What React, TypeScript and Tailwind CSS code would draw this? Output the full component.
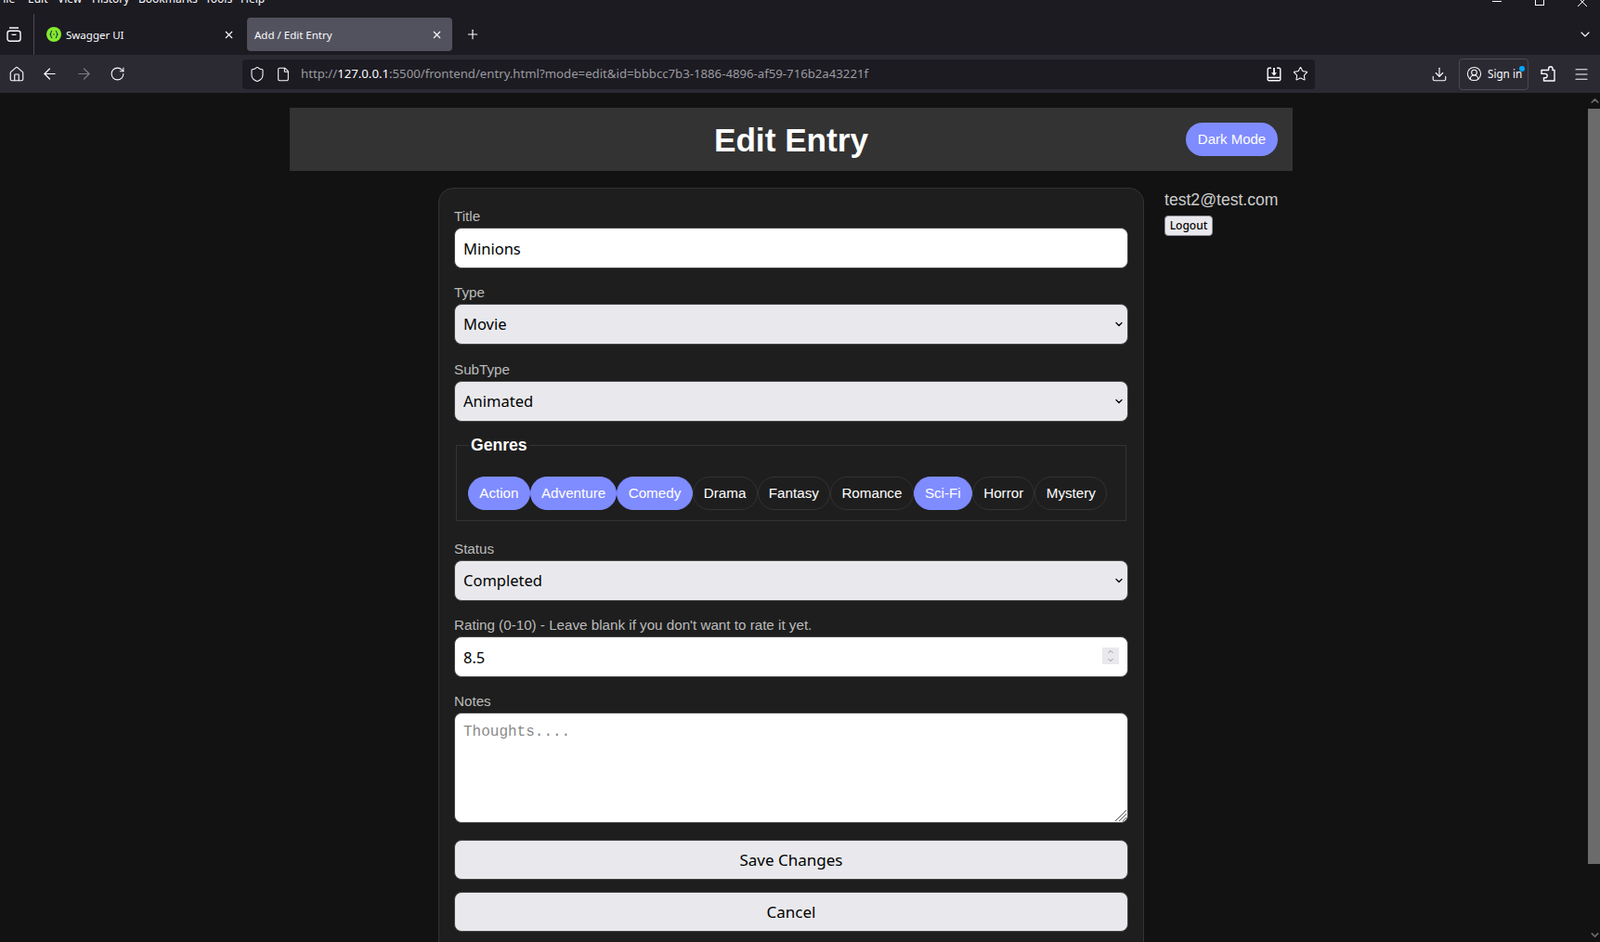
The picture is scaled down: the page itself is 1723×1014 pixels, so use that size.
import {
  ArrowLeft,
  ArrowRight,
  ChevronDown,
  ChevronUp,
  CircleUserRound,
  Download,
  File,
  Home,
  Menu,
  Plus,
  RotateCw,
  Shield,
  Star,
  X,
} from "lucide-react";

const menuItems = [
  { name: "File", width: "w-[33px]" },
  { name: "Edit", width: "w-[32px]" },
  { name: "View", width: "w-[37px]" },
  { name: "History", width: "w-[50px]" },
  { name: "Bookmarks", width: "w-[72px]" },
  { name: "Tools", width: "w-[38px]" },
  { name: "Help", width: "w-[30px]" },
];

const genres = [
  { name: "Action", active: true },
  { name: "Adventure", active: true },
  { name: "Comedy", active: true },
  { name: "Drama", active: false },
  { name: "Fantasy", active: false },
  { name: "Romance", active: false },
  { name: "Sci-Fi", active: true },
  { name: "Horror", active: false },
  { name: "Mystery", active: false },
];

const labelClass = "mb-[3px] block h-[18px] text-[15.2px] leading-[18px] text-[#bbbbbb]";
const controlClass =
  "block h-[44px] w-full rounded-[8px] border border-[#444444] px-[9px] pt-[1px] font-['Noto_Sans',sans-serif] text-[16.5px] text-black outline-none";
const buttonClass =
  "block h-[43px] w-full rounded-[8px] border border-[#444444] bg-[#e9e9ed] font-['Noto_Sans',sans-serif] text-[17px] text-black";

function SelectField({ label, value, spacing }: { label: string; value: string; spacing: string }) {
  return (
    <div className={spacing}>
      <label className={labelClass}>{label}</label>
      <div className="relative">
        <select
          defaultValue={value}
          className={`${controlClass} appearance-none bg-[#e9e9ed]`}
        >
          <option>{value}</option>
        </select>
        <ChevronDown
          size={12}
          strokeWidth={2.5}
          className="pointer-events-none absolute right-[4px] top-[16px] text-black"
        />
      </div>
    </div>
  );
}

function WindowControls() {
  return (
    <div className="ml-auto mr-[-4px] flex text-white">
      <div className="flex w-[46px] justify-center">
        <svg width="10" height="10" viewBox="0 0 10 10" stroke="currentColor" fill="none">
          <path d="M0 1.5h10" />
        </svg>
      </div>
      <div className="flex w-[46px] justify-center">
        <svg width="10" height="10" viewBox="0 0 10 10" stroke="currentColor" fill="none">
          <rect x="0.5" y="-4.5" width="9" height="10" />
        </svg>
      </div>
      <div className="flex w-[46px] justify-center">
        <svg width="10" height="10" viewBox="0 0 10 10" stroke="currentColor" fill="none">
          <path d="M0 -3l10 10M10 -3L0 7" />
        </svg>
      </div>
    </div>
  );
}

function BrowserChrome() {
  return (
    <div className="shrink-0 bg-[#1c1b22] font-['Noto_Sans',sans-serif] text-[#fbfbfe]">
      {/* menu bar is cut off at the top of the screen */}
      <div className="flex h-[10px] overflow-hidden">
        <div className="ml-[-3px] mt-[-11px] flex text-[12px] leading-[20px]">
          {menuItems.map((item) => (
            <span key={item.name} className={item.width}>
              {item.name}
            </span>
          ))}
        </div>
        <WindowControls />
      </div>

      <div className="flex h-[49px] items-center pt-[5px]">
        <div className="flex w-[28px] justify-center pl-[1px]">
          <svg width="16" height="16" viewBox="0 0 16 16" fill="none" stroke="currentColor" strokeWidth="1.4">
            <rect x="1" y="4.2" width="14" height="11" rx="2.5" />
            <path d="M3 1h10M5.6 8.4h4.8" />
          </svg>
        </div>
        <div className="ml-[8px] h-[44px] w-px self-end bg-[#4a4a52]" />
        <div className="flex w-[229px] items-center pl-[13px]">
          <svg width="16" height="16" viewBox="0 0 16 16" className="shrink-0">
            <circle cx="8" cy="8" r="8" fill="#85ea2d" />
            <path
              d="M6.2 4.2C4.6 4.2 5.4 7.2 4 8c1.4.8.6 3.8 2.2 3.8M9.8 4.2c1.6 0 .8 3 2.2 3.8-1.4.8-.6 3.8-2.2 3.8"
              fill="none"
              stroke="#173647"
              strokeWidth="1.1"
            />
            <circle cx="8" cy="8" r="0.7" fill="#173647" />
          </svg>
          <span className="ml-[5px] pt-[1px] text-[11.5px]">Swagger UI</span>
          <X size={13} strokeWidth={2} className="ml-auto mr-[13px]" />
        </div>
        <div className="flex h-[36px] w-[221px] items-center rounded-[4px] bg-[#52525e] pl-[8px] pr-[10px] text-[11.5px]">
          <span className="pt-[1px]">Add / Edit Entry</span>
          <X size={13} strokeWidth={2} className="ml-auto" />
        </div>
        <div className="flex w-[44px] justify-center">
          <Plus size={16} strokeWidth={1.7} />
        </div>
        <div className="ml-auto flex w-[32px] justify-center">
          <ChevronDown size={16} strokeWidth={1.7} />
        </div>
      </div>

      <div className="flex h-[41px] items-center bg-[#2b2a33]">
        <div className="flex w-[35px] justify-center">
          <Home size={18} strokeWidth={1.5} />
        </div>
        <div className="flex w-[37px] justify-center">
          <ArrowLeft size={19} strokeWidth={1.5} />
        </div>
        <div className="flex w-[36px] justify-center text-[#7b7b82]">
          <ArrowRight size={19} strokeWidth={1.5} />
        </div>
        <div className="flex w-[36px] justify-center">
          <RotateCw size={17} strokeWidth={1.5} />
        </div>
        <div className="ml-[117px] flex h-[32px] w-[1155px] items-center rounded-[4px] bg-[#1c1b22] pl-[7px]">
          <Shield size={18} strokeWidth={1.4} />
          <File size={16} strokeWidth={1.6} className="ml-[11px]" />
          <span className="ml-[11px] text-[13.2px] text-[#9a9a9f]">
            http://<span className="text-[#fbfbfe]">127.0.0.1</span>:5500/frontend/entry.html?mode=edit&amp;id=bbbcc7b3-1886-4896-af59-716b2a43221f
          </span>
          <svg width="16" height="16" viewBox="0 0 16 16" fill="none" stroke="currentColor" strokeWidth="1.4" className="ml-auto mr-[12px]">
            <path d="M5 1.2H2.6c-.8 0-1.4.6-1.4 1.4v10.8c0 .8.6 1.4 1.4 1.4h10.8c.8 0 1.4-.6 1.4-1.4V2.6c0-.8-.6-1.4-1.4-1.4H11M1.2 11.5h13.6" />
            <path d="M8 1v6.5" strokeWidth="1.8" />
            <path d="M5 6.2h6L8 9.4z" fill="currentColor" stroke="none" />
          </svg>
          <Star size={17} strokeWidth={1.5} className="mr-[7px]" />
        </div>
        <div className="ml-[116px] flex w-[36px] justify-center">
          <Download size={18} strokeWidth={1.5} />
        </div>
        <div className="relative ml-[3px] flex h-[34px] w-[75px] items-center rounded-[4px] border border-[#4a4a52] pl-[7px] text-[11.7px]">
          <CircleUserRound size={17} strokeWidth={1.5} />
          <span className="ml-[6px]">Sign in</span>
          <span className="absolute right-[3px] top-[7px] h-[6px] w-[6px] rounded-full bg-[#00a6ff]" />
        </div>
        <div className="ml-[3px] flex w-[36px] justify-center">
          <svg width="16" height="17" viewBox="0 0 16 17" fill="none" stroke="currentColor" strokeWidth="1.4" strokeLinejoin="round">
            <path d="M7 4.5h1.6V3a2.2 2.2 0 014.4 0v1.5H15V16H3.5v-3.2H5a2.2 2.2 0 000-4.4H1V4.5z" />
          </svg>
        </div>
        <div className="flex w-[36px] justify-center">
          <Menu size={18} strokeWidth={1.5} />
        </div>
      </div>
    </div>
  );
}

function EntryForm() {
  return (
    <form className="h-[900px] rounded-t-[16px] border border-[#333333] bg-[#1e1e1e] px-[16px] pt-[21px]">
      <div className="mb-[17px]">
        <label className={labelClass}>Title</label>
        <input defaultValue="Minions" className={`${controlClass} bg-white`} />
      </div>

      <SelectField label="Type" value="Movie" spacing="mb-[18px]" />
      <SelectField label="SubType" value="Animated" spacing="mb-[15px]" />

      <fieldset className="mx-[2px] mb-[21px] h-[92px] border border-[#333333] pl-[12px]">
        <legend className="ml-[1px] px-[2px] text-[17.6px] font-bold leading-[20px] text-white">
          Genres
        </legend>
        <div className="mt-[24px] flex">
          {genres.map((genre) => (
            <span
              key={genre.name}
              className={`flex h-[36px] items-center rounded-[18px] border px-[11.25px] text-[15.2px] text-white ${
                genre.active
                  ? "border-[#7f8cff] bg-[#7f8cff]"
                  : "border-[#333333] bg-[#1e1e1e]"
              }`}
            >
              {genre.name}
            </span>
          ))}
        </div>
      </fieldset>

      <SelectField label="Status" value="Completed" spacing="mb-[17px]" />

      <div className="mb-[17px]">
        <label className={labelClass}>
          Rating (0-10) - Leave blank if you don't want to rate it yet.
        </label>
        <div className="relative">
          <input defaultValue="8.5" className={`${controlClass} bg-white`} />
          <div className="absolute right-[10px] top-[12px] flex h-[18px] w-[18px] flex-col items-center justify-center bg-[#e9e9ed] text-[#777777]">
            <ChevronUp size={10} strokeWidth={2} />
            <ChevronDown size={10} strokeWidth={2} />
          </div>
        </div>
      </div>

      <div className="mb-[18px]">
        <label className={labelClass}>Notes</label>
        <div className="relative">
          <textarea
            placeholder="Thoughts...."
            className="block h-[119px] w-full resize-none rounded-[8px] border border-[#444444] bg-white px-[9px] py-[11px] font-['Liberation_Mono',monospace] text-[16px] leading-[18px] text-black outline-none placeholder:text-[#8a8a8a]"
          />
          <svg width="14" height="14" viewBox="0 0 14 14" stroke="#555555" className="pointer-events-none absolute bottom-[1px] right-[1px]">
            <path d="M1 13L13 1M5 13l8-8M9 13l4-4" />
          </svg>
        </div>
      </div>

      <button type="button" className={`${buttonClass} mb-[13px]`}>
        Save Changes
      </button>
      <button type="button" className={buttonClass}>
        Cancel
      </button>
    </form>
  );
}

export default function App() {
  return (
    <div className="flex h-screen flex-col overflow-hidden bg-[#121212] font-['Liberation_Sans',Arial,sans-serif]">
      <BrowserChrome />
      <div className="flex min-h-0 flex-1">
        <main className="min-w-0 flex-1 pt-[16px]">
          <div className="mx-auto w-[1080px]">
            <header className="relative flex h-[68px] items-center justify-center bg-[#333333] pt-[3px]">
              <h1 className="text-[35.2px] font-bold text-white">Edit Entry</h1>
              <button
                type="button"
                className="absolute right-[16px] top-[16px] h-[36px] w-[99px] rounded-[18px] bg-[#7f8cff] text-[15px] text-white"
              >
                Dark Mode
              </button>
            </header>
            <div className="mt-[18px] grid grid-cols-[160px_760px_160px]">
              <div />
              <EntryForm />
              <aside className="pl-[22px] pt-[3px]">
                <p className="text-[17.6px] leading-[20px] text-[#cccccc]">test2@test.com</p>
                <button
                  type="button"
                  className="mt-[7px] flex h-[22px] w-[52px] items-center justify-center rounded-[4px] border border-[#8f8f9d] bg-[#e9e9ed] font-['Noto_Sans',sans-serif] text-[12px] font-medium text-black"
                >
                  Logout
                </button>
              </aside>
            </div>
          </div>
        </main>
        <div className="flex w-[19px] shrink-0 flex-col items-end">
          <ChevronUp size={13} strokeWidth={3} className="mr-[-1px] mt-[2px] text-[#6b6b6b]" />
          <div className="mt-[2px] h-[813px] w-[13px] bg-[#6b6b6b]" />
          <ChevronDown size={13} strokeWidth={3} className="mb-[1px] mr-[-1px] mt-auto text-[#6b6b6b]" />
        </div>
      </div>
    </div>
  );
}
